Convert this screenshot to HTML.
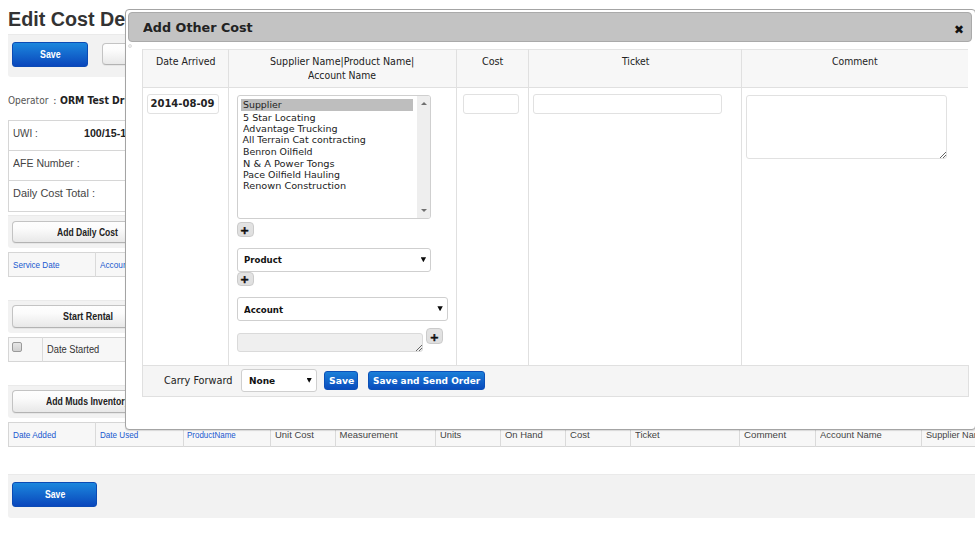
<!DOCTYPE html>
<html>
<head>
<meta charset="utf-8">
<title>Edit Cost Details</title>
<style>
*{box-sizing:border-box;margin:0;padding:0}
html,body{width:975px;height:540px;overflow:hidden;background:#fff}
body{font-family:"Liberation Sans",Arial,sans-serif;font-size:12px;color:#333;position:relative}
.abs{position:absolute}
button{font:inherit;color:inherit;text-align:left;overflow:visible;cursor:pointer;display:block}
h1.t{margin:0}
.t{position:absolute;white-space:nowrap;line-height:normal;transform-origin:0 0;display:block}
.bar{position:absolute;left:8px;width:967px;background:#f2f2f2;border-top:1px solid #eaeaea;border-radius:0 0 0 3px}
.btnblue{position:absolute;border-radius:3px;background:linear-gradient(#1c87dd,#0a47bc);border:1px solid #0b4bb5}
.btnwhite{position:absolute;border-radius:4px;background:linear-gradient(#fefefe 0%,#fbfbfb 35%,#e8e8e8 100%);border:1px solid #c3c3c3;border-bottom-color:#b3b3b3;box-shadow:0 1px 0 #e6e6e6}
.hl{position:absolute;height:1px;background:#d6d6d6}
.vl{position:absolute;width:1px;background:#dadada}
.box{position:absolute;border:1px solid #d6d6d6}
.hd{background:#f7f7f7}
#dlg{position:absolute;left:125px;top:9px;width:851px;height:421px;background:#fff;border:1px solid #a4a4a4;border-radius:4px;box-shadow:0 1px 1px rgba(0,0,0,0.13)}
#dlgt{position:absolute;left:128px;top:12px;width:844px;height:30px;background:#c3c3c3;border:1px solid #aaaaaa;border-radius:4px}
.inp{position:absolute;background:#fff;border:1px solid #e1e1e1;border-radius:3px}
.sel{position:absolute;background:#fff;border:1px solid #cfcfcf;border-radius:3px}
.plus{position:absolute;background:linear-gradient(#e3e3e3,#dfdfdf);border:1px solid #cbcbcb;border-radius:4px}
.arr{position:absolute;width:5.4px;height:5px;background:#0a0a0a;clip-path:polygon(0 0,100% 0,50% 100%)}
.dbtn{position:absolute;border-radius:3px;background:linear-gradient(#1a7fd8,#0a4cbd);border:1px solid #0b50b8}
</style>
</head>
<body>
<!-- ===== underlying page ===== -->
<div id="page">
<div class="bar" style="top:34px;height:43px"></div>
<button type="button" class="btnblue" style="left:12px;top:42px;width:76px;height:25px"><span class="t" style="left:27.00px;top:6.00px;font:bold 10px 'Liberation Sans',Arial,sans-serif;color:#fff;transform:scaleX(0.8826)">Save</span></button>
<button type="button" class="btnwhite" style="left:102px;top:43px;width:76px;height:22px"><span class="t" style="left:25.00px;top:4.00px;font:bold 10px 'Liberation Sans',Arial,sans-serif;color:#222;transform:scaleX(0.8200)">Cancel</span></button>

<div class="box" style="left:8px;top:120px;width:975px;height:92px"></div>
<div class="hl" style="left:8px;top:150px;width:967px"></div>
<div class="hl" style="left:8px;top:180px;width:967px"></div>

<div class="bar" style="top:215px;height:33px"></div>
<button type="button" class="btnwhite" style="left:12px;top:221px;width:140px;height:22px"><span class="t" style="left:44.00px;top:5.00px;font:bold 10px 'Liberation Sans',Arial,sans-serif;color:#222;transform:scaleX(0.8567)">Add Daily Cost</span></button>
<div class="box hd" style="left:8px;top:252px;width:975px;height:25px"></div>
<div class="vl" style="left:95px;top:252px;height:25px"></div>

<div class="bar" style="top:300px;height:33px"></div>
<button type="button" class="btnwhite" style="left:12px;top:305px;width:140px;height:23px"><span class="t" style="left:50.00px;top:5.00px;font:bold 10px 'Liberation Sans',Arial,sans-serif;color:#222;transform:scaleX(0.8918)">Start Rental</span></button>
<div class="box hd" style="left:8px;top:337px;width:975px;height:25px"></div>
<div class="vl" style="left:42px;top:337px;height:25px"></div>
<div class="abs" style="left:12px;top:342px;width:10px;height:10px;border:1px solid #9a9a9a;border-radius:2px;background:linear-gradient(#e6e6e6,#d0d0d0)"></div>

<div class="bar" style="top:385px;height:33px"></div>
<button type="button" class="btnwhite" style="left:12px;top:390px;width:140px;height:23px"><span class="t" style="left:32.50px;top:5.00px;font:bold 10px 'Liberation Sans',Arial,sans-serif;color:#222;transform:scaleX(0.8686)">Add Muds Inventory</span></button>
<div class="box hd" style="left:8px;top:422px;width:975px;height:25px"></div>
<div class="vl" style="left:95px;top:422px;height:25px"></div>
<div class="vl" style="left:183px;top:422px;height:25px"></div>
<div class="vl" style="left:270px;top:422px;height:25px"></div>
<div class="vl" style="left:335px;top:422px;height:25px"></div>
<div class="vl" style="left:435px;top:422px;height:25px"></div>
<div class="vl" style="left:500px;top:422px;height:25px"></div>
<div class="vl" style="left:565px;top:422px;height:25px"></div>
<div class="vl" style="left:630px;top:422px;height:25px"></div>
<div class="vl" style="left:739px;top:422px;height:25px"></div>
<div class="vl" style="left:815px;top:422px;height:25px"></div>
<div class="vl" style="left:921px;top:422px;height:25px"></div>

<div class="bar" style="top:474px;height:44px"></div>
<button type="button" class="btnblue" style="left:12px;top:482px;width:85px;height:25px"><span class="t" style="left:31.60px;top:6.00px;font:bold 10px 'Liberation Sans',Arial,sans-serif;color:#fff;transform:scaleX(0.8658)">Save</span></button>
<h1 class="t" style="left:8.02px;top:8.00px;font:bold 20px 'Liberation Sans',Arial,sans-serif;color:#333;transform:scaleX(0.9849)">Edit Cost Details</h1>
<span class="t" style="left:8.10px;top:94.00px;font:normal 11px 'DejaVu Sans Condensed','DejaVu Sans',Verdana,sans-serif;color:#555;transform:scaleX(0.9110)">Operator</span>
<span class="t" style="left:52.60px;top:94.00px;font:normal 11px 'DejaVu Sans Condensed','DejaVu Sans',Verdana,sans-serif;color:#555;transform:scaleX(1.1000)">:</span>
<span class="t" style="left:60.00px;top:94.00px;font:bold 11px 'DejaVu Sans Condensed','DejaVu Sans',Verdana,sans-serif;color:#222;transform:scaleX(0.9400)">ORM Test Drilling</span>
<span class="t" style="left:13.40px;top:127.00px;font:normal 11px 'Liberation Sans',Arial,sans-serif;color:#444;transform:scaleX(0.8966)">UWI :</span>
<span class="t" style="left:83.70px;top:127.00px;font:bold 11px 'Liberation Sans',Arial,sans-serif;color:#222;transform:scaleX(0.9700)">100/15-12-045-06W5/00</span>
<span class="t" style="left:13.40px;top:157.00px;font:normal 11px 'Liberation Sans',Arial,sans-serif;color:#444;transform:scaleX(0.9565)">AFE Number :</span>
<span class="t" style="left:13.40px;top:187.00px;font:normal 11px 'Liberation Sans',Arial,sans-serif;color:#444;transform:scaleX(0.9955)">Daily Cost Total :</span>
<span class="t" style="left:13.00px;top:260.00px;font:normal 9px 'Liberation Sans',Arial,sans-serif;color:#2058cf;transform:scaleX(0.9026)">Service Date</span>
<span class="t" style="left:100.00px;top:260.00px;font:normal 9px 'Liberation Sans',Arial,sans-serif;color:#2058cf;transform:scaleX(0.9150)">Account Name</span>
<span class="t" style="left:47.00px;top:344.00px;font:normal 10px 'Liberation Sans',Arial,sans-serif;color:#333;transform:scaleX(0.9311)">Date Started</span>
<span class="t" style="left:12.50px;top:430.00px;font:normal 9px 'Liberation Sans',Arial,sans-serif;color:#2058cf;transform:scaleX(0.9152)">Date Added</span>
<span class="t" style="left:99.75px;top:430.00px;font:normal 9px 'Liberation Sans',Arial,sans-serif;color:#2058cf;transform:scaleX(0.8997)">Date Used</span>
<span class="t" style="left:187.00px;top:430.00px;font:normal 9px 'Liberation Sans',Arial,sans-serif;color:#2058cf;transform:scaleX(0.8861)">ProductName</span>
<span class="t" style="left:274.50px;top:429.00px;font:normal 9.5px 'Liberation Sans',Arial,sans-serif;color:#444;transform:scaleX(0.9955)">Unit Cost</span>
<span class="t" style="left:339.50px;top:429.00px;font:normal 9.5px 'Liberation Sans',Arial,sans-serif;color:#444">Measurement</span>
<span class="t" style="left:439.50px;top:429.00px;font:normal 9.5px 'Liberation Sans',Arial,sans-serif;color:#444;transform:scaleX(0.9820)">Units</span>
<span class="t" style="left:504.50px;top:429.00px;font:normal 9.5px 'Liberation Sans',Arial,sans-serif;color:#444;transform:scaleX(0.9936)">On Hand</span>
<span class="t" style="left:569.75px;top:429.00px;font:normal 9.5px 'Liberation Sans',Arial,sans-serif;color:#444;transform:scaleX(1.0053)">Cost</span>
<span class="t" style="left:635.00px;top:429.00px;font:normal 9.5px 'Liberation Sans',Arial,sans-serif;color:#444;transform:scaleX(0.9864)">Ticket</span>
<span class="t" style="left:744.00px;top:429.00px;font:normal 9.5px 'Liberation Sans',Arial,sans-serif;color:#444;transform:scaleX(1.0232)">Comment</span>
<span class="t" style="left:819.50px;top:429.00px;font:normal 9.5px 'Liberation Sans',Arial,sans-serif;color:#444;transform:scaleX(0.9916)">Account Name</span>
<span class="t" style="left:925.90px;top:429.00px;font:normal 9.5px 'Liberation Sans',Arial,sans-serif;color:#444;transform:scaleX(0.9632)">Supplier Name</span>
</div>

<!-- ===== dialog ===== -->
<div id="dlg"></div>
<div id="dlgbody">
<div id="dlgt"><span class="t" style="left:14.00px;top:7.00px;font:bold 13px 'DejaVu Sans',sans-serif;color:#222;transform:scaleX(0.9805)">Add Other Cost</span><span class="t" style="left:824.74px;top:9.00px;font:bold 12.5px 'DejaVu Sans',sans-serif;color:#111;transform:scaleX(0.9556)">✖</span></div>
<div class="abs" style="left:128px;top:44px;width:4px;height:4px;border-radius:2px;background:#f1f1f1;border:1px solid #dedede"></div>
<!-- table -->
<div class="abs hd" style="left:142px;top:49px;width:826px;height:38px"></div>
<div class="abs" style="left:142px;top:365px;width:827px;height:32px;background:#f5f5f5;border:1px solid #e0e0e0"></div>
<div class="hl" style="left:142px;top:49px;width:826px;background:#e4e4e4"></div>
<div class="hl" style="left:142px;top:87px;width:826px;background:#e0e0e0"></div>
<div class="vl" style="left:142px;top:49px;height:317px;background:#e0e0e0"></div>
<div class="vl" style="left:228px;top:49px;height:316px;background:#e0e0e0"></div>
<div class="vl" style="left:456px;top:49px;height:316px;background:#e0e0e0"></div>
<div class="vl" style="left:528px;top:49px;height:316px;background:#e0e0e0"></div>
<div class="vl" style="left:741px;top:49px;height:316px;background:#e0e0e0"></div>

<div class="inp" style="left:147px;top:94px;width:72px;height:20px"></div>
<!-- listbox -->
<div class="sel" style="left:237px;top:95px;width:194px;height:124px;border-radius:3px"></div>
<div class="abs" style="left:417px;top:96px;width:13px;height:122px;background:#eeeeee;border-radius:0 2px 2px 0"></div>
<div class="abs" style="left:241px;top:99px;width:172px;height:12px;background:#bebebe"></div>
<div class="abs" style="left:421px;top:102px;width:0;height:0;border-left:3px solid transparent;border-right:3px solid transparent;border-bottom:3px solid #707070"></div>
<div class="abs" style="left:421px;top:209px;width:0;height:0;border-left:3px solid transparent;border-right:3px solid transparent;border-top:3px solid #707070"></div>

<button type="button" class="plus" style="left:237px;top:222px;width:17px;height:15px"><span class="t" style="left:2.00px;top:1.00px;font:bold 11px 'DejaVu Sans',sans-serif;color:#111;-webkit-text-stroke:0.5px #111">+</span></button>
<div class="sel" style="left:237px;top:248px;width:194px;height:24px"></div>
<div class="arr" style="left:420.7px;top:257.2px"></div>
<button type="button" class="plus" style="left:237px;top:272px;width:17px;height:14px"><span class="t" style="left:2.00px;top:0.00px;font:bold 11px 'DejaVu Sans',sans-serif;color:#111;-webkit-text-stroke:0.5px #111">+</span></button>
<div class="sel" style="left:237px;top:297px;width:211px;height:24px"></div>
<div class="arr" style="left:437.4px;top:306.2px"></div>
<div class="inp" style="left:237px;top:333px;width:186px;height:19px;background:#efefef;border-color:#dadada"></div>
<svg class="abs" style="left:414.5px;top:344px" width="8" height="8" viewBox="0 0 8 8"><path d="M1 7L7 1M4 7L7 4" stroke="#666" stroke-width="1" fill="none"/></svg>
<button type="button" class="plus" style="left:426px;top:328px;width:17px;height:16px"><span class="t" style="left:2.65px;top:2.00px;font:bold 11px 'DejaVu Sans',sans-serif;color:#111;-webkit-text-stroke:0.5px #111">+</span></button>

<div class="inp" style="left:463px;top:94px;width:56px;height:20px"></div>
<div class="inp" style="left:533px;top:94px;width:189px;height:20px"></div>
<div class="inp" style="left:746px;top:95px;width:201px;height:64px"></div>
<svg class="abs" style="left:939px;top:150.5px" width="8" height="8" viewBox="0 0 8 8"><path d="M1 7L7 1M4 7L7 4" stroke="#666" stroke-width="1" fill="none"/></svg>

<!-- footer controls -->
<div class="sel" style="left:241px;top:369px;width:76px;height:23px"></div>
<div class="arr" style="left:306.5px;top:377.8px"></div>
<button type="button" class="dbtn" style="left:324px;top:371px;width:34px;height:19px"><span class="t" style="left:3.70px;top:3.00px;font:bold 9.5px 'DejaVu Sans',Verdana,sans-serif;color:#fff;transform:scaleX(0.9786)">Save</span></button>
<button type="button" class="dbtn" style="left:368px;top:371px;width:117px;height:19px"><span class="t" style="left:4.25px;top:3.00px;font:bold 9.5px 'DejaVu Sans',Verdana,sans-serif;color:#fff;transform:scaleX(0.9460)">Save and Send Order</span></button>
<span class="t" style="left:155.75px;top:55.00px;font:normal 11px 'DejaVu Sans Condensed','DejaVu Sans',Verdana,sans-serif;color:#222;transform:scaleX(0.9526)">Date Arrived</span>
<span class="t" style="left:270.00px;top:55.00px;font:normal 11px 'DejaVu Sans Condensed','DejaVu Sans',Verdana,sans-serif;color:#222;transform:scaleX(0.9643)">Supplier Name|Product Name|</span>
<span class="t" style="left:308.00px;top:69.00px;font:normal 11px 'DejaVu Sans Condensed','DejaVu Sans',Verdana,sans-serif;color:#222;transform:scaleX(0.9421)">Account Name</span>
<span class="t" style="left:482.00px;top:55.00px;font:normal 11px 'DejaVu Sans Condensed','DejaVu Sans',Verdana,sans-serif;color:#222;transform:scaleX(0.9719)">Cost</span>
<span class="t" style="left:621.54px;top:55.00px;font:normal 11px 'DejaVu Sans Condensed','DejaVu Sans',Verdana,sans-serif;color:#222;transform:scaleX(0.9365)">Ticket</span>
<span class="t" style="left:832.25px;top:55.00px;font:normal 11px 'DejaVu Sans Condensed','DejaVu Sans',Verdana,sans-serif;color:#222;transform:scaleX(0.9411)">Comment</span>
<span class="t" style="left:150.50px;top:98.00px;font:bold 10px 'DejaVu Sans',sans-serif;color:#222">2014-08-09</span>
<span class="t" style="left:242.50px;top:99.00px;font:normal 9.5px 'DejaVu Sans',Verdana,sans-serif;color:#222;transform:scaleX(0.9876)">Supplier</span>
<span class="t" style="left:242.50px;top:112.00px;font:normal 9.5px 'DejaVu Sans',Verdana,sans-serif;color:#222;transform:scaleX(1.0079)">5 Star Locating</span>
<span class="t" style="left:242.50px;top:123.00px;font:normal 9.5px 'DejaVu Sans',Verdana,sans-serif;color:#222;transform:scaleX(1.0055)">Advantage Trucking</span>
<span class="t" style="left:242.50px;top:134.00px;font:normal 9.5px 'DejaVu Sans',Verdana,sans-serif;color:#222">All Terrain Cat contracting</span>
<span class="t" style="left:242.50px;top:146.00px;font:normal 9.5px 'DejaVu Sans',Verdana,sans-serif;color:#222;transform:scaleX(0.9906)">Benron Oilfield</span>
<span class="t" style="left:242.50px;top:158.00px;font:normal 9.5px 'DejaVu Sans',Verdana,sans-serif;color:#222;transform:scaleX(1.0324)">N &amp; A Power Tongs</span>
<span class="t" style="left:242.50px;top:169.00px;font:normal 9.5px 'DejaVu Sans',Verdana,sans-serif;color:#222;transform:scaleX(0.9921)">Pace Oilfield Hauling</span>
<span class="t" style="left:242.50px;top:180.00px;font:normal 9.5px 'DejaVu Sans',Verdana,sans-serif;color:#222;transform:scaleX(1.0185)">Renown Construction</span>
<span class="t" style="left:244.25px;top:254.00px;font:bold 9.5px 'DejaVu Sans',Verdana,sans-serif;color:#111;transform:scaleX(0.9028)">Product</span>
<span class="t" style="left:244.00px;top:304.00px;font:bold 9.5px 'DejaVu Sans',Verdana,sans-serif;color:#111;transform:scaleX(0.9046)">Account</span>
<span class="t" style="left:163.80px;top:374.00px;font:normal 11px 'DejaVu Sans Condensed','DejaVu Sans',Verdana,sans-serif;color:#222;transform:scaleX(0.9832)">Carry Forward</span>
<span class="t" style="left:248.90px;top:375.00px;font:bold 9.5px 'DejaVu Sans',Verdana,sans-serif;color:#111;transform:scaleX(0.9471)">None</span>
</div>
</body>
</html>
